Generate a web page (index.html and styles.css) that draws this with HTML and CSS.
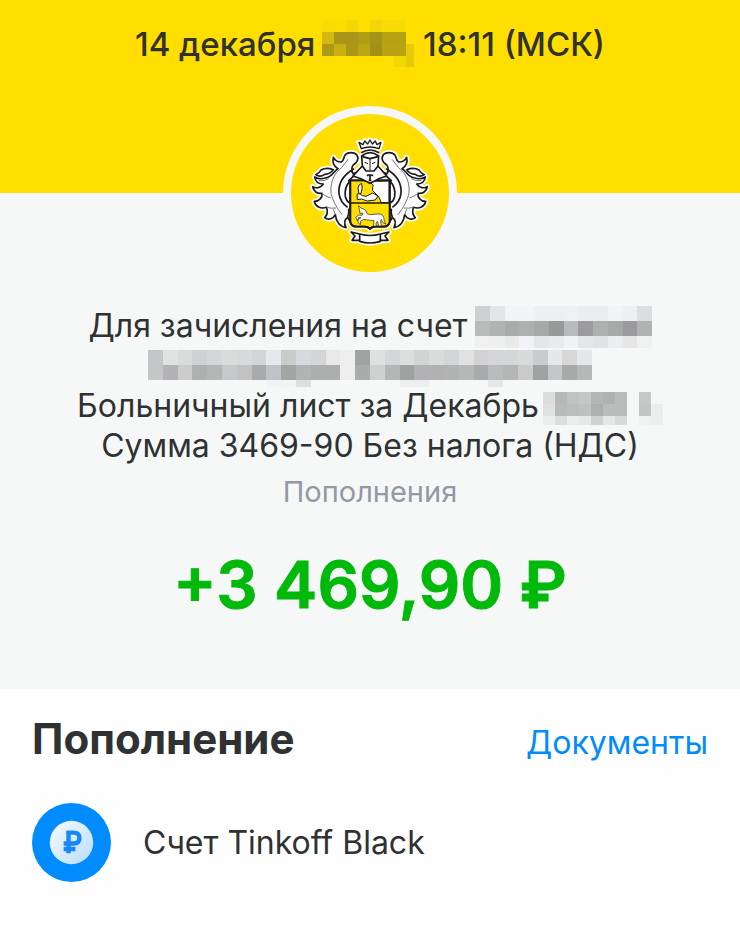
FILE: index.html
```html
<!DOCTYPE html>
<html lang="ru">

<head>
    <meta charset="UTF-8">
    <meta name="viewport" content="width=device-width, initial-scale=1.0">
    <title>Пополнение</title>
    <link rel="stylesheet" href="styles.css">
</head>

<body>
    <header class="top">
        <time class="date">14 декабря <svg class="mosaic mosaic-date" viewBox="0 0 92 47" data-cell="12" data-rows="f8dc04 fbdd02 f4d704 ffde00 f3d605 f8da04 f8da04|d3b90f a99619 a99619 b19c16 a59318 b7a213 b7a213|ae9a16 c9b010 aa9717 bba513 a28f18 b9a313 b9a313 e6c909|- - - - - - f3d704 e6c909"></svg> 18:11 (МСК)</time>
        <div class="logo">
            <svg viewBox="33 42 474 474" role="img" aria-label="Tinkoff">
                <defs>
                    <g id="plume">
                        <path d="M246 206Q232 216 220 222C212 212 214 196 228 188Q238 176 230 164C222 156 204 156 196 164C190 172 192 182 184 186C172 186 164 180 160 172C156 188 164 200 174 206C160 214 160 226 144 232C128 238 112 236 104 231C106 246 118 252 130 252C122 264 108 266 98 260C100 274 112 282 126 280C128 292 118 304 103 304C106 320 122 328 140 322C144 338 140 348 134 353C146 362 160 356 166 344C168 362 178 380 198 383C192 370 194 358 203 352L211 366V242H206Z" />
                        <path d="M107 224Q118 220 123 210Q139 201 160 209Q151 223 134 223Q121 233 107 224Z" />
                    </g>
                    <path id="plume-edge" d="M222 206C194 222 174 246 177 280Q180 306 203 322M211 242Q192 262 196 290Q200 304 208 308M203 352Q208 340 206 326" />
                    <path id="veins" d="M204 178Q184 206 166 222Q150 248 153 280Q160 310 186 344M116 242Q134 244 146 236M126 280Q138 290 152 294M140 322Q154 326 168 324M166 344L160 328" />
                    <path id="shield" d="M211 241H329V366Q327 379 312 380H286Q274 381 270 387Q266 381 254 380H228Q213 379 211 366Z" />
                    <path id="ribbon" d="M213 396L239 402Q270 411 301 402L327 396L315 408L324 421L301 421V424Q270 434 239 424V421L216 421L225 408Z" />
                    <path id="helmet" d="M245 168Q270 148 296 168L294 198L320 228Q298 234 282 244L270 250L258 244Q240 234 219 228L247 198Z" />
                    <path id="crown" d="M244 146L237 127L249 134L254 123L263 132L270 120L277 132L286 123L291 134L303 127L297 146Q270 136 244 146Z" />
                </defs>
                <circle class="logo-bg" cx="270" cy="279" r="237" />
                <g class="halo">
                    <use href="#plume" />
                    <use href="#plume" transform="matrix(-1 0 0 1 540 0)" />
                    <use href="#shield" />
                    <use href="#ribbon" />
                    <use href="#helmet" />
                    <use href="#crown" />
                </g>
                <g class="ink">
                    <use href="#plume" />
                    <use href="#plume" transform="matrix(-1 0 0 1 540 0)" />
                    <use href="#plume-edge" />
                    <use href="#plume-edge" transform="matrix(-1 0 0 1 540 0)" />
                    <use href="#veins" />
                    <use href="#veins" transform="matrix(-1 0 0 1 540 0)" />
                    <use href="#shield" class="gold" />
                    <path class="thin" d="M268 244L280 256Q276 264 278 272L296 290L304 308H327V243Z" />
                    <path class="thin" d="M238 280Q246 289 258 289L278 279L294 288L286 300L262 303L244 297L232 299L231 283Z" />
                    <path class="thin" d="M237 282L234 264Q236 252 245 250Q249 263 243 280Z" />
                    <path d="M211 309H329" />
                    <path class="horse" d="M236 317L244 325Q254 326 258 333Q260 343 268 344L292 342Q308 340 311 352Q312 362 317 372Q306 370 304 358L302 362L304 380H297L292 364L288 370L289 380H280L282 362L262 360L252 358L241 364L242 374L234 368V360L243 353L236 352L232 362L227 352L236 345L246 346L249 340L240 340Z" />
                    <use href="#shield" class="no-fill" />
                    <use href="#ribbon" />
                    <path class="no-fill" d="M239 402V421M301 402V421" />
                    <use href="#helmet" />
                    <path class="no-fill" d="M247 170L270 176L294 170M247 198L258 213H282L294 198" />
                    <path class="thin no-fill" d="M270 176V210M254 187L264 191M286 187L276 191" />
                    <path d="M263 229V225H277V229M270 226V241M266 241H274" />
                    <use href="#crown" class="crown" />
                    <path class="no-fill" d="M244 158Q270 142 297 158" />
                </g>
            </svg>
        </div>
    </header>

    <main>
        <section class="operation">
            <p class="details">
                Для зачисления на счет <svg class="mosaic mosaic-name" viewBox="0 0 177 42" data-cell="14.75" data-rows="cfd0d1 e4e5e7 f2f3f4 f3f4f7 eeeff1 eeeff1 eff0f2 ecedee ebedef f2f3f6 edeff1 dcdde0|b9baba b2b4b3 a9acaa adb0ae a6a9a7 979a98 b9babd 9c9c9f adb0ae a6a9a7 9b9b9e b0b3b1|f0f0f1 eeeff1 ebeaeb f2f3f6 e5e6e6 e9eaec f1f2f4 e5e6e8 e1e2e3 ecedee e6e6e7 eff0f2"></svg><br>
                <svg class="mosaic mosaic-surname" viewBox="0 0 444 37" data-cell="14.8" data-rows="c5c6c9 e1e3e2 dadcdb d0d1d4 d5d6d9 dadcdb d8d9dc d4d5d8 e7e8eb cacbcb d8d9dc d4d6d5 e9e9e9 eeeeee a0a3a2 dfe1e0 d5d6d9 dddfde d2d4d3 dadcdb d4d5d8 e0e2e1 d2d2d2 d5d6d7 d5d6d8 d9dbda cacbce e6e7ea d7d7d7 e6e7e9|c5c7c6 b3b3b6 cccccc adb0af b3b6b5 c7c8cb c2c2c2 a9aaad c1c2c5 a2a5a4 b1b4b3 acafae acadaf eeeeee a9acab cfd1d0 b3b6b5 9fa2a1 b2b2b5 b1b1b4 b1b4b3 b5b8b7 a9aaad b9bbbd b4b6b5 cacaca a0a3a2 c5c6c9 a7aaa9 b5b8b7|- - - - - - - - f1f3f5 f3f5f5 dddee0 - - - - - - eceef0 eceef0 - - - - e6e8e8"></svg><br>
                Больничный лист за Декабрь<svg class="mosaic mosaic-tail" viewBox="0 0 120 33" data-cell="12" data-rows="dcdddd b7b9b8 c1c3c2 c5c7c6 b5b7b6 b0b1b1 babcbb - c6c8c7 -|e0e2e1 b9bbba bcbebd bfc1c0 aeafaf babcbb babcbb - c3c5c4 ebeded|eceded dcdede eceded e7e8e8 d0d1d1 e5e7e6 d8dad9 - f0f1f1 eceeee"></svg><br>
                Сумма 3469-90 Без налога (НДС)
            </p>
            <p class="category">Пополнения</p>
            <p class="amount">+3 469,90 ₽</p>
        </section>

        <section class="account">
            <div class="account-header">
                <h1>Пополнение</h1>
                <a href="#" class="documents">Документы</a>
            </div>
            <div class="account-row">
                <svg class="account-icon" viewBox="0 0 80 80" aria-hidden="true">
                    <defs>
                        <linearGradient id="coin" x1="0" y1="0" x2="1" y2="1">
                            <stop offset="0" stop-color="#f8fbff" />
                            <stop offset="1" stop-color="#b9dbff" />
                        </linearGradient>
                    </defs>
                    <circle cx="40" cy="40" r="40" fill="#008cff" />
                    <circle cx="40" cy="40" r="22" fill="url(#coin)" />
                    <path d="M37 51V30H42Q48 30 48 35.500T42 41H32M32 46.500H44" fill="none" stroke="#1689f5" stroke-width="4.500" />
                </svg>
                <span>Счет Tinkoff Black</span>
            </div>
        </section>
    </main>

    <script>
        // Закрашивает скрытые данные квадратами
        document.querySelectorAll('.mosaic').forEach((svg) => {
            const cell = parseFloat(svg.dataset.cell);

            svg.dataset.rows.split('|').forEach((row, y) => {
                row.split(' ').forEach((color, x) => {
                    if (color === '-') return;

                    const rect = document.createElementNS('http://www.w3.org/2000/svg', 'rect');
                    rect.setAttribute('x', x * cell);
                    rect.setAttribute('y', y * cell);
                    rect.setAttribute('width', cell);
                    rect.setAttribute('height', cell);
                    rect.setAttribute('fill', '#' + color);
                    svg.appendChild(rect);
                });
            });
        });
    </script>
</body>

</html>
```
FILE: styles.css
```css
* {
    box-sizing: border-box;
}

body {
    font-family: Inter, "Liberation Sans", sans-serif;
    font-size: 32px;
    line-height: 40px;
    color: #2f3133;
    background-color: #fefefe;
    margin: 0;
}

h1,
p {
    margin: 0;
}

.top {
    display: flex;
    flex-direction: column;
    align-items: center;
    gap: 40px;
    padding-top: 22px;
    background-color: #ffde00;
}

.date {
    font-size: 33px;
    font-weight: 500;
    line-height: 44px;
    white-space: nowrap;
}

.logo {
    width: 174px;
    height: 174px;
    padding: 8px;
    margin-bottom: -87px;
    border-radius: 50%;
    background-color: #f6f8f8;
}

.logo svg {
    display: block;
    width: 100%;
}

.logo-bg,
.gold {
    fill: #ffde00;
}

.halo {
    fill: #fff;
    stroke: #fff;
    stroke-width: 16;
    stroke-linejoin: round;
}

.ink {
    fill: #fcfcfc;
    stroke: #1c191b;
    stroke-width: 5;
    stroke-linejoin: round;
}

.thin {
    stroke-width: 3;
}

.horse {
    stroke-width: 2;
}

.crown {
    stroke-width: 4;
}

#veins {
    fill: none;
    stroke: #77777a;
    stroke-width: 3;
}

#plume-edge,
.no-fill {
    fill: none;
}

.mosaic {
    shape-rendering: crispEdges;
}

.mosaic-date {
    width: 92px;
    height: 47px;
    margin: -12px 0 -4px -2px;
    vertical-align: middle;
}

.mosaic-name {
    width: 177px;
    height: 42px;
    margin: -10px 0 -8px -2px;
    vertical-align: middle;
}

.mosaic-surname {
    width: 444px;
    height: 37px;
    margin: -10px 0;
    vertical-align: middle;
}

.mosaic-tail {
    width: 120px;
    height: 33px;
    margin: -10px 0 -10px 4px;
    vertical-align: middle;
}

.operation {
    padding: 113px 32px 64px;
    text-align: center;
    background-color: #f6f8f8;
}

.category {
    margin-top: 6px;
    font-size: 29px;
    color: #9299a5;
}

.amount {
    margin-top: 33px;
    font-size: 65px;
    font-weight: 600;
    line-height: 80px;
    color: #00b90a;
    -webkit-text-stroke: 1px #00b90a;
}

.account {
    padding: 22px 32px;
}

.account-header {
    display: flex;
    justify-content: space-between;
    align-items: baseline;
}

h1 {
    font-size: 42px;
    line-height: 56px;
}

.documents {
    color: #008cff;
    text-decoration: none;
}

.account-row {
    display: flex;
    align-items: center;
    gap: 32px;
    margin-top: 36px;
}

.account-icon {
    width: 79px;
    height: 79px;
}
```
